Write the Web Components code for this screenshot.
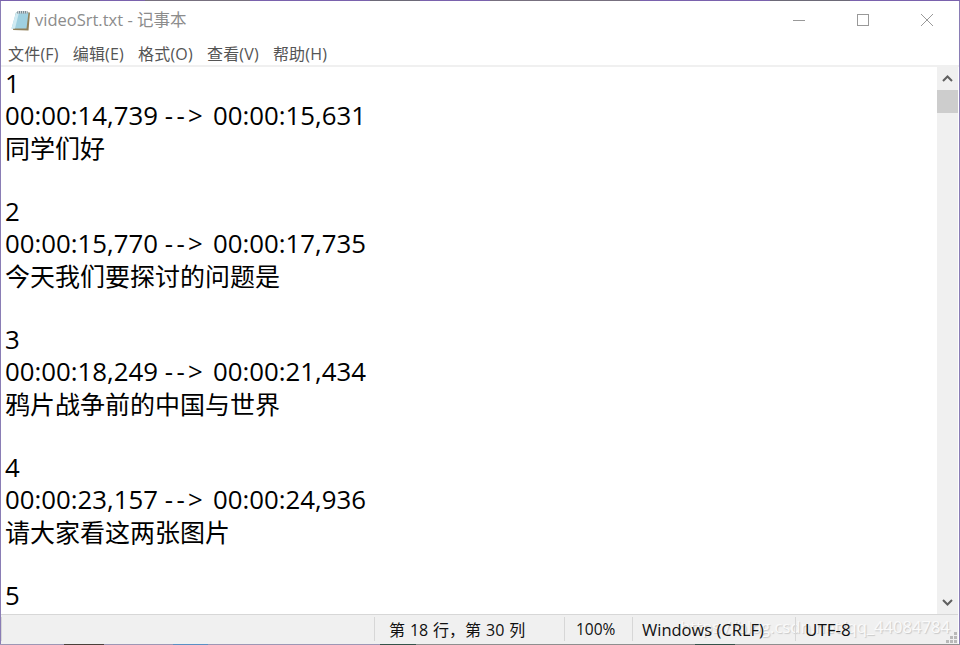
<!DOCTYPE html>
<html lang="zh">
<head>
<meta charset="utf-8">
<title>videoSrt.txt - 记事本</title>
<style>
  html, body { margin: 0; height: 100%; background: #6f5f9f; overflow: hidden; }
</style>
</head>
<body>
<notepad-window>
  <title-bar slot="title">videoSrt.txt - 记事本</title-bar>
  <menu-bar slot="menu"></menu-bar>
  <text-editor slot="editor">
    <srt-cue num="1" start="00:00:14,739" end="00:00:15,631">同学们好</srt-cue>
    <srt-cue num="2" start="00:00:15,770" end="00:00:17,735">今天我们要探讨的问题是</srt-cue>
    <srt-cue num="3" start="00:00:18,249" end="00:00:21,434">鸦片战争前的中国与世界</srt-cue>
    <srt-cue num="4" start="00:00:23,157" end="00:00:24,936">请大家看这两张图片</srt-cue>
    <srt-cue num="5"></srt-cue>
  </text-editor>
  <status-bar slot="status"></status-bar>
</notepad-window>

<script>
const uiFont = '"Open Sans", "Noto Sans CJK SC", sans-serif';

class notepadWindow extends HTMLElement {
  constructor() {
    super();
    this.shadowDOM = this.attachShadow({ mode: 'open' });
    // the 1px strips are the desktop wallpaper showing round the window
    const noise = (stops) => `linear-gradient(90deg, ${stops.map(([c, a, b]) => `${c} ${a}px ${b}px`).join(', ')})`;
    const top = noise([
      ['#7a62ad', 0, 70], ['#6d6a78', 70, 100], ['#7a62ad', 100, 145], ['#77707f', 145, 250],
      ['#7a62ad', 250, 370], ['#6d6a78', 370, 420], ['#7a62ad', 420, 490], ['#77707f', 490, 640],
      ['#7a62ad', 640, 770], ['#6d6a78', 770, 850], ['#7a62ad', 850, 960],
    ]);
    const bottom = noise([
      ['#9d97b5', 0, 64], ['#4a403c', 64, 104], ['#9d97b5', 104, 173], ['#5b8fc4', 173, 208],
      ['#9d97b5', 208, 380], ['#35524a', 380, 416], ['#8f8f8f', 416, 695], ['#35524a', 695, 735],
      ['#8f8f8f', 735, 960],
    ]);
    this.shadowDOM.innerHTML = `
    <style>
    :host {
        display: flex;
        flex-direction: column;
        box-sizing: border-box;
        width: 960px;
        height: 645px;
        padding: 1px 1px 1px 1px;
        background: ${top} top / 100% 1px no-repeat, ${bottom} bottom / 100% 1px no-repeat, #8a7db5;
    }
    .frame {
        flex: 1;
        min-height: 0;
        display: flex;
        flex-direction: column;
        box-sizing: border-box;
        padding-right: 1px;
        background: #fff;
    }
    </style>
    <div class="frame">
      <slot name="title"></slot>
      <slot name="menu"></slot>
      <slot name="editor"></slot>
      <slot name="status"></slot>
    </div>`;
  }
}

class titleBar extends HTMLElement {
  constructor() {
    super();
    this.shadowDOM = this.attachShadow({ mode: 'open' });
    this.shadowDOM.innerHTML = `
    <style>
    :host {
        display: flex;
        align-items: center;
        box-sizing: border-box;
        height: 39px;
        flex: none;
        padding: 0 0 1px 10px;
        margin-right: -1px;
        font: 16.5px ${uiFont};
        color: #8c8c8c;
    }
    .icon { width: 20px; height: 21px; margin-right: 4px; flex: none; }
    .name { flex: 1; white-space: nowrap; position: relative; top: -1px; }
    .btns { display: flex; align-self: stretch; }
    .btn { width: 64px; display: flex; align-items: center; justify-content: center; }
    .btn svg { width: 12px; height: 12px; }
    </style>
    <svg class="icon" viewBox="0 0 20 21">
      <path d="M5 2.5 L19 2.5 L17.5 20.5 L2 20 Z" fill="#8f7f58"/>
      <path d="M5 2.5 L17.5 2.5 L15.5 18.5 L0.5 18.5 Z" fill="#9fd0e0"/>
      <path d="M5 2.5 L8 2.5 L4 18.5 L0.5 18.5 Z" fill="#cfeaf2"/>
      <path d="M6.5 1 H16.5 V3.5 H6 Z" fill="#7c8c94"/>
      <path d="M7.5 1V3.5M9.5 1V3.5M11.5 1V3.5M13.5 1V3.5M15.5 1V3.5" stroke="#dfe6e8" stroke-width=".8"/>
    </svg>
    <span class="name"><slot></slot></span>
    <div class="btns">
      <div class="btn"><svg viewBox="0 0 12 12"><path d="M0 6.5H12" stroke="#999" fill="none"/></svg></div>
      <div class="btn"><svg viewBox="0 0 12 12"><rect x="0.5" y="0.5" width="11" height="11" stroke="#999" fill="none"/></svg></div>
      <div class="btn"><svg viewBox="0 0 12 12"><path d="M0 0L12 12M12 0L0 12" stroke="#999" fill="none"/></svg></div>
    </div>`;
  }
}

class menuBar extends HTMLElement {
  constructor() {
    super();
    this.shadowDOM = this.attachShadow({ mode: 'open' });
    const items = ['文件(F)', '编辑(E)', '格式(O)', '查看(V)', '帮助(H)'];
    this.shadowDOM.innerHTML = `
    <style>
    :host {
        display: flex;
        flex: none;
        align-items: center;
        gap: 14px;
        box-sizing: border-box;
        height: 27px;
        margin-right: -1px;
        padding-left: 7px;
        border-bottom: 2px solid #f0f0f0;
        font: 16px ${uiFont};
        letter-spacing: .2px;
        color: #555;
    }
    </style>
    ${items.map((item) => `<span>${item}</span>`).join('')}`;
  }
}

class srtCue extends HTMLElement {
  constructor() {
    super();
    this.shadowDOM = this.attachShadow({ mode: 'open' });
  }

  connectedCallback() {
    this.render();
  }

  render() {
    const num = this.getAttribute('num');
    const start = this.getAttribute('start');
    const end = this.getAttribute('end');
    this.shadowDOM.innerHTML = `
    <style>
    :host { display: block; height: 128px; }
    div { height: 32px; white-space: pre; }
    .num, .time { font-size: 25.8px; }
    .arrow { letter-spacing: 3.4px; }
    .line { height: 31px; padding-top: 1px; }
    </style>
    <div class="num">${num}</div>
    ${start ? `<div class="time">${start} <span class="arrow">--&gt;</span> ${end}</div><div class="line"><slot></slot></div>` : ''}`;
  }
}

class textEditor extends HTMLElement {
  constructor() {
    super();
    this.shadowDOM = this.attachShadow({ mode: 'open' });
    this.shadowDOM.innerHTML = `
    <style>
    :host {
        display: flex;
        flex: 1;
        min-height: 0;
        font: 25px/32px ${uiFont};
        color: #000;
    }
    .text {
        flex: 1;
        overflow: hidden;
        padding-left: 4px;
    }
    .track {
        flex: none;
        width: 21px;
        display: flex;
        flex-direction: column;
        background: #f0f0f0;
    }
    .arrow { height: 23px; display: flex; align-items: center; justify-content: center; flex: none; }
    .arrow svg { width: 11px; height: 7px; }
    .thumb { height: 23px; background: #cdcdcd; flex: none; }
    .rest { flex: 1; }
    </style>
    <div class="text"><slot></slot></div>
    <div class="track">
      <div class="arrow"><svg viewBox="0 0 11 7"><path d="M1 6L5.5 1.5L10 6" stroke="#606060" stroke-width="2" fill="none"/></svg></div>
      <div class="thumb"></div>
      <div class="rest"></div>
      <div class="arrow"><svg viewBox="0 0 11 7"><path d="M1 1L5.5 5.5L10 1" stroke="#606060" stroke-width="2" fill="none"/></svg></div>
    </div>`;
  }
}

class statusBar extends HTMLElement {
  constructor() {
    super();
    this.shadowDOM = this.attachShadow({ mode: 'open' });
    this.shadowDOM.innerHTML = `
    <style>
    :host {
        display: grid;
        grid-template-columns: 373px 190px 68px 163px 1fr;
        position: relative;
        flex: none;
        height: 30px;
        box-sizing: border-box;
        border-top: 1px solid #d7d7d7;
        background: #f0f0f0;
        font: 16.5px ${uiFont};
        color: #111;
    }
    .cell {
        position: relative;
        z-index: 1;
        display: flex;
        align-items: center;
        padding-left: 9px;
        margin: 2px 0 3px;
        border-left: 1px solid #d7d7d7;
        white-space: nowrap;
    }
    .cell:first-child { border: 0; }
    .pos { padding-left: 14px; font-size: 16px; word-spacing: .75px; }
    .zoom { padding-left: 11px; font-size: 15.5px; }
    .enc { font-size: 17px; }
    .mark {
        position: absolute;
        right: 8px;
        top: 0;
        font-size: 16.6px;
        color: #fafafa;
        text-shadow: 1px 1px 1px #c8c8c8;
        white-space: nowrap;
    }
    .grip { position: absolute; right: 1px; bottom: 1px; width: 11px; height: 11px; }
    </style>
    <div class="cell"></div>
    <div class="cell pos">第 18 行，第 30 列</div>
    <div class="cell zoom">100%</div>
    <div class="cell">Windows (CRLF)</div>
    <div class="cell enc">UTF-8</div>
    <span class="mark">https://blog.csdn.net/qq_44084784</span>
    <svg class="grip" viewBox="0 0 11 11" fill="#b9b9b9">
      <rect x="8" y="0" width="3" height="3"/>
      <rect x="4" y="4" width="3" height="3"/><rect x="8" y="4" width="3" height="3"/>
      <rect x="0" y="8" width="3" height="3"/><rect x="4" y="8" width="3" height="3"/><rect x="8" y="8" width="3" height="3"/>
    </svg>`;
  }
}

customElements.define('notepad-window', notepadWindow);
customElements.define('title-bar', titleBar);
customElements.define('menu-bar', menuBar);
customElements.define('srt-cue', srtCue);
customElements.define('text-editor', textEditor);
customElements.define('status-bar', statusBar);
</script>
</body>
</html>
